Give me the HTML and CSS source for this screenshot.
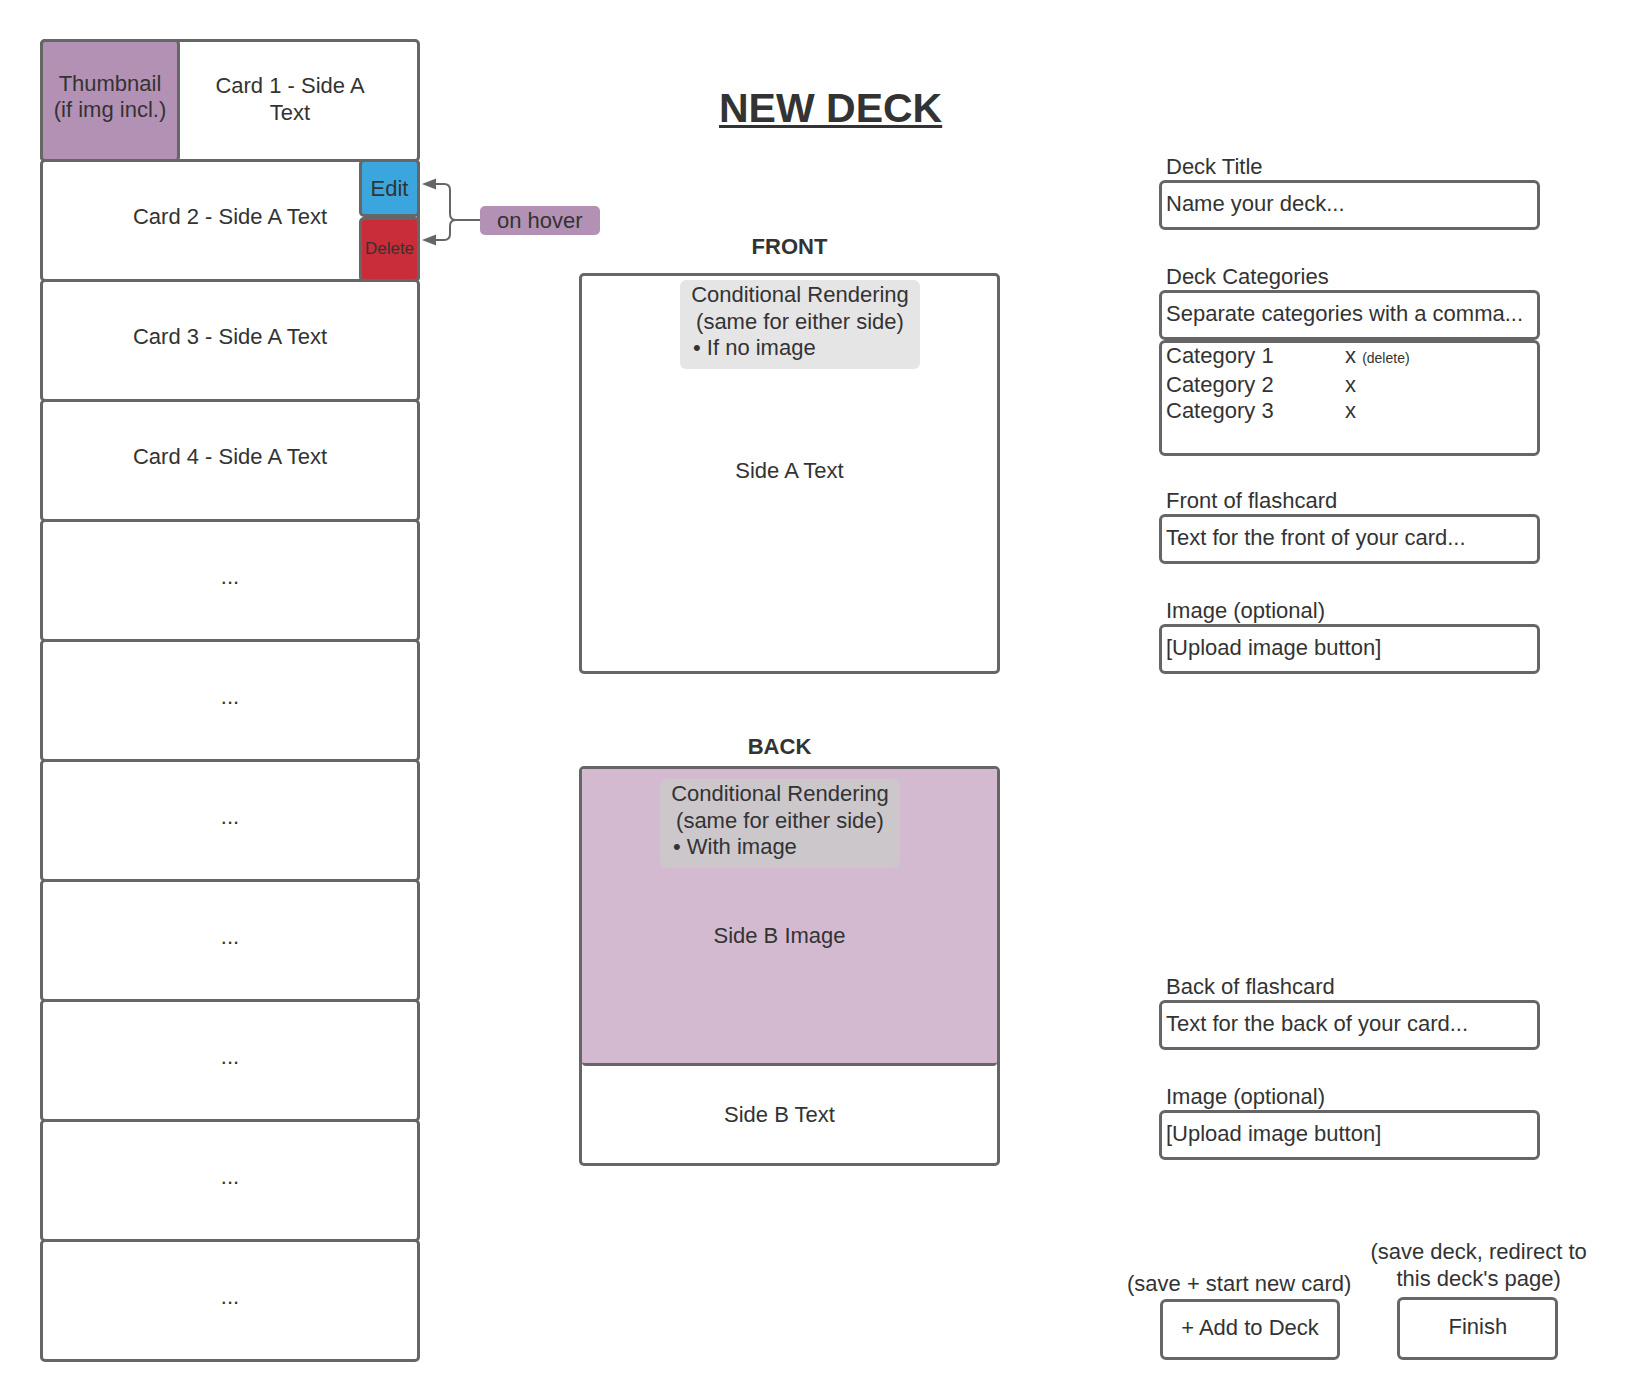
FILE: index.html
```html
<!DOCTYPE html>
<html lang="en">
<head>
    <meta charset="UTF-8">
    <meta name="viewport" content="width=device-width, initial-scale=1.0">
    <title>New Deck - Wireframe</title>
    <link rel="stylesheet" href="styles.css">
</head>
<body>
    <div class="board">
        <!-- card list -->
        <aside class="card-list">
            <div class="card card-first">
                <div class="thumb">Thumbnail<br>(if img incl.)</div>
                <div class="card-first-text">Card 1 - Side A Text</div>
            </div>
            <div class="card card-hover">
                <div class="card-text">Card 2 - Side A Text</div>
                <div class="card-actions">
                    <div class="action action-edit">Edit</div>
                    <div class="action action-delete">Delete</div>
                </div>
                <div class="hover-note">
                    <svg class="hover-bracket" width="60" height="80" viewBox="0 0 60 80">
                        <path d="M15 15 H24 Q30 15 30 21 V45 Q30 51 36 51 H60 M36 51 Q30 51 30 57 V65 Q30 71 24 71 H15" fill="none" stroke="#666" stroke-width="2"/>
                        <path d="M2 15 L16 9.5 L16 20.5 Z M2 71 L16 65.5 L16 76.5 Z" fill="#666"/>
                    </svg>
                    <span class="hover-tag">on hover</span>
                </div>
            </div>
            <div class="card"><div class="card-text">Card 3 - Side A Text</div></div>
            <div class="card"><div class="card-text">Card 4 - Side A Text</div></div>
            <div class="card"><div class="card-text">...</div></div>
            <div class="card"><div class="card-text">...</div></div>
            <div class="card"><div class="card-text">...</div></div>
            <div class="card"><div class="card-text">...</div></div>
            <div class="card"><div class="card-text">...</div></div>
            <div class="card"><div class="card-text">...</div></div>
            <div class="card"><div class="card-text">...</div></div>
        </aside>

        <!-- card preview -->
        <main class="preview">
            <h1 class="deck-title">NEW DECK</h1>

            <h2 class="side-label side-label-front">FRONT</h2>
            <div class="flashcard flashcard-front">
                <div class="render-note note-front">
                    <div>Conditional Rendering</div>
                    <div>(same for either side)</div>
                    <div class="note-bullet">• If no image</div>
                </div>
                <div class="side-text">Side A Text</div>
            </div>

            <h2 class="side-label side-label-back">BACK</h2>
            <div class="flashcard flashcard-back">
                <div class="image-area">
                    <div class="render-note note-back">
                        <div>Conditional Rendering</div>
                        <div>(same for either side)</div>
                        <div class="note-bullet">• With image</div>
                    </div>
                    <div class="side-text">Side B Image</div>
                </div>
                <div class="text-area">Side B Text</div>
            </div>
        </main>

        <!-- deck form -->
        <section class="form">
            <div class="field field-first">
                <div class="field-label">Deck Title</div>
                <div class="field-box">Name your deck...</div>
            </div>

            <div class="field">
                <div class="field-label">Deck Categories</div>
                <div class="field-box">Separate categories with a comma...</div>
                <div class="category-list">
                    <div class="category-row"><span>Category 1</span><span>x <small class="delete-hint">(delete)</small></span></div>
                    <div class="category-row"><span>Category 2</span><span>x</span></div>
                    <div class="category-row"><span>Category 3</span><span>x</span></div>
                </div>
            </div>

            <div class="field field-front">
                <div class="field-label">Front of flashcard</div>
                <div class="field-box">Text for the front of your card...</div>
            </div>

            <div class="field">
                <div class="field-label">Image (optional)</div>
                <div class="field-box">[Upload image button]</div>
            </div>

            <div class="field field-back">
                <div class="field-label">Back of flashcard</div>
                <div class="field-box">Text for the back of your card...</div>
            </div>

            <div class="field">
                <div class="field-label">Image (optional)</div>
                <div class="field-box">[Upload image button]</div>
            </div>

            <div class="actions-row">
                <div class="submit-group">
                    <div class="submit-note">(save + start new card)</div>
                    <div class="submit-btn submit-add">+ Add to Deck</div>
                </div>
                <div class="submit-group">
                    <div class="submit-note submit-finish-note">(save deck, redirect to<br>this deck's page)</div>
                    <div class="submit-btn submit-finish">Finish</div>
                </div>
            </div>
        </section>
    </div>
</body>
</html>
```

FILE: styles.css
```css
* {
    margin: 0;
    padding: 0;
    box-sizing: border-box;
}

body {
    font-family: "Liberation Sans", Arial, sans-serif;
    font-size: 22px;
    color: #333;
    background: #fff;
}

.board {
    display: flex;
    align-items: flex-start;
    padding: 39px 0 0 40px;
}

/* card list */
.card-list {
    width: 380px;
    flex-shrink: 0;
}

.card {
    position: relative;
    height: 123px;
    border: 3px solid #666;
    border-radius: 5px;
    background: #fff;
    display: flex;
    align-items: center;
    justify-content: center;
    text-align: center;
    line-height: 27px;
    padding-bottom: 8px;
}

.card + .card {
    margin-top: -3px;
}

.card-first {
    justify-content: flex-start;
    align-items: stretch;
    padding-bottom: 0;
}

.thumb {
    width: 140px;
    margin: -3px 0 -3px -3px;
    padding-bottom: 8px;
    background: #b391b5;
    border: 3px solid #666;
    border-radius: 5px;
    display: flex;
    align-items: center;
    justify-content: center;
    line-height: 26px;
}

.card-first-text {
    flex: 1;
    padding: 0 42px 4px 25px;
    display: flex;
    align-items: center;
    justify-content: center;
}

.card-hover {
    display: grid;
    grid-template-columns: 1fr 58px;
    padding-bottom: 0;
}

.card-hover .card-text {
    grid-column: 1 / -1;
    grid-row: 1;
    align-self: center;
    padding-bottom: 8px;
}

.card-actions {
    grid-column: 2;
    grid-row: 1;
    align-self: stretch;
    margin: -3px -3px -3px 0;
    display: flex;
    flex-direction: column;
}

.action {
    border: 3px solid #666;
    border-radius: 5px;
    display: flex;
    align-items: center;
    justify-content: center;
}

.action-edit {
    height: 58px;
    background: #3aa6dd;
}

.action-delete {
    flex: 1;
    background: #c92d39;
    font-size: 17px;
    padding-bottom: 3px;
}

.hover-note {
    position: absolute;
    left: calc(100% + 3px);
    top: 7px;
    display: flex;
    align-items: flex-start;
}

.hover-bracket {
    display: block;
}

.hover-tag {
    margin-top: 37px;
    height: 29px;
    line-height: 29px;
    padding: 0 17px;
    background: #b391b5;
    border-radius: 5px;
    white-space: nowrap;
}

/* preview */
.preview {
    width: 421px;
    margin-left: 159px;
    flex-shrink: 0;
    display: flex;
    flex-direction: column;
}

.deck-title {
    align-self: flex-start;
    margin: 46px 0 0 140px;
    font-size: 41px;
    line-height: 47px;
    font-weight: 700;
    text-decoration: underline;
    text-decoration-thickness: 3px;
    text-underline-offset: 3px;
}

.side-label {
    font-size: 22px;
    line-height: 26px;
    font-weight: 700;
    text-align: center;
}

.side-label-front {
    margin-top: 102px;
}

.side-label-back {
    margin-top: 60px;
    padding-right: 20px;
}

.flashcard {
    border: 3px solid #666;
    border-radius: 5px;
    background: #fff;
    display: flex;
    flex-direction: column;
    align-items: flex-start;
}

.flashcard-front {
    height: 401px;
    margin-top: 13px;
}

.flashcard-back {
    height: 400px;
    margin-top: 6px;
}

.render-note {
    width: 240px;
    padding: 2px 10px 7px;
    border-radius: 6px;
    background: #e5e5e5;
    line-height: 26.5px;
    text-align: center;
    white-space: nowrap;
}

.note-front {
    margin: 4px 0 0 98px;
}

.note-back {
    margin: 10px 0 0 78px;
    background: #cbc7cb;
}

.note-bullet {
    text-align: left;
    padding-left: 3px;
}

.side-text {
    align-self: stretch;
    text-align: center;
    line-height: 26px;
}

.flashcard-front .side-text {
    margin-top: 89px;
}

.image-area {
    align-self: stretch;
    height: 297px;
    background: #d4bad0;
    border-bottom: 3px solid #666;
    border-radius: 3px 3px 4px 4px;
    display: flex;
    flex-direction: column;
    align-items: flex-start;
}

.image-area .side-text {
    margin-top: 55px;
    padding-right: 20px;
}

.text-area {
    align-self: stretch;
    flex: 1;
    display: flex;
    align-items: center;
    justify-content: center;
    padding-right: 20px;
}

/* form */
.form {
    margin-left: 127px;
    width: 470px;
    flex-shrink: 0;
    display: flex;
    flex-direction: column;
}

.field {
    margin-left: 32px;
    width: 381px;
    margin-top: 32px;
}

.field-first {
    margin-top: 113px;
}

.field-front {
    margin-top: 30px;
}

.field-back {
    margin-top: 298px;
}

.field-label {
    padding: 2px 0 0 7px;
    line-height: 26px;
    white-space: nowrap;
}

.field-box {
    height: 50px;
    border: 3px solid #666;
    border-radius: 6px;
    padding: 0 0 3px 4px;
    display: flex;
    align-items: center;
    white-space: nowrap;
}

.category-list {
    height: 116px;
    border: 3px solid #666;
    border-radius: 6px;
    padding-left: 4px;
    line-height: 26.5px;
}

.category-row {
    display: grid;
    grid-template-columns: 179px auto;
}

.delete-hint {
    font-size: 14px;
}

.actions-row {
    display: flex;
    align-items: flex-end;
    gap: 19px;
    margin-top: 78px;
}

.submit-group {
    display: flex;
    flex-direction: column;
    align-items: flex-start;
}

.submit-note {
    line-height: 26px;
    white-space: nowrap;
    text-align: center;
}

.submit-finish-note {
    line-height: 27px;
}

.submit-btn {
    border: 3px solid #666;
    border-radius: 6px;
    display: flex;
    align-items: center;
    justify-content: center;
    padding-bottom: 3px;
}

.submit-add {
    width: 180px;
    height: 61px;
    margin: 2px 0 0 33px;
}

.submit-finish {
    width: 161px;
    height: 63px;
    margin: 5px 0 0 27px;
}
```
